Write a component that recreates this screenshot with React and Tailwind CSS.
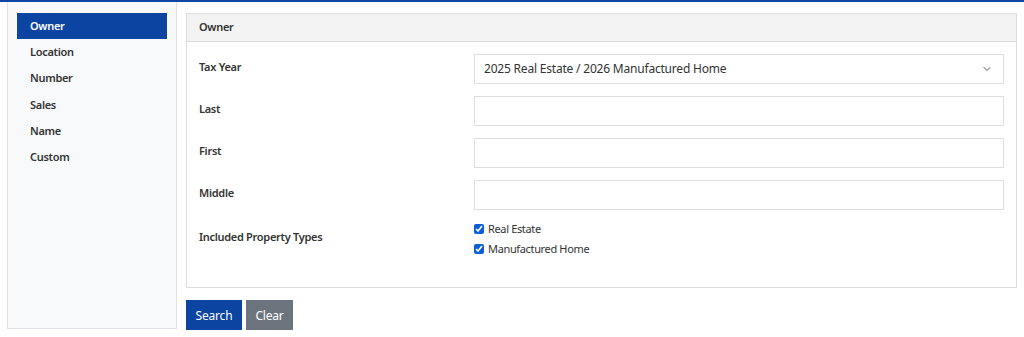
import React, { useState } from 'react';
import { ChevronDown } from 'lucide-react';

const navItems = ['Owner', 'Location', 'Number', 'Sales', 'Name', 'Custom'];

const FieldRow = ({ label, children, className = '' }) => (
  <div className={`flex items-center ${className}`}>
    <div className="w-[275px] shrink-0 pb-[3px] text-[11px] font-semibold tracking-[-0.3px] text-[#333]">{label}</div>
    <div className="flex-1">{children}</div>
  </div>
);

const TextBox = () => (
  <input
    type="text"
    className="block h-[30px] w-full border border-[#dedede] bg-white px-2 text-[12px] outline-none"
  />
);

const Check = ({ label }) => (
  <label className="flex h-[20px] items-center gap-[4px] text-[11px] tracking-[-0.35px] text-[#333]">
    <input type="checkbox" defaultChecked className="h-[10px] w-[10px] accent-[#0b5ed7]" />
    <span>{label}</span>
  </label>
);

export default function App() {
  const [active, setActive] = useState('Owner');

  return (
    <div className="min-h-[337px] border-t-2 border-[#0d47a1] bg-white font-['Noto_Sans',sans-serif] text-[#333]">
      <div className="flex">
        {/* Sidebar */}
        <div className="ml-[7px] h-[327px] w-[170px] shrink-0 border-x border-b border-[#dee2e6] bg-[#f8f9fb] px-[9px] pt-[11px]">
          {navItems.map((item) => (
            <div
              key={item}
              onClick={() => setActive(item)}
              className={
                active === item
                  ? 'flex h-[26.3px] cursor-pointer items-center bg-[#0b45a1] px-[13px] text-[11px] font-semibold tracking-[-0.3px] text-white'
                  : 'flex h-[26.3px] cursor-pointer items-center px-[13px] text-[11px] font-semibold tracking-[-0.3px] text-[#333]'
              }
            >
              {item}
            </div>
          ))}
        </div>

        {/* Main */}
        <div className="ml-[9px] mt-[11px] w-[831px]">
          <div className="border border-[#dcdcdc]">
            <div className="flex h-[28px] items-center border-b border-[#dcdcdc] bg-[#f3f3f3] px-[12px] text-[11px] font-semibold tracking-[-0.3px]">
              Owner
            </div>
            <div className="flex flex-col gap-[12px] px-[12px] pb-[28px] pt-[12px]">
              <FieldRow label="Tax Year">
                <div className="flex h-[30px] items-center justify-between border border-[#dedede] bg-white pb-[1px] pl-[9px] pr-[10px] text-[12px] tracking-[-0.2px]">
                  <span>2025 Real Estate / 2026 Manufactured Home</span>
                  <ChevronDown className="h-[12px] w-[12px] text-[#555]" strokeWidth={2} />
                </div>
              </FieldRow>
              <FieldRow label="Last">
                <TextBox />
              </FieldRow>
              <FieldRow label="First">
                <TextBox />
              </FieldRow>
              <FieldRow label="Middle">
                <TextBox />
              </FieldRow>
              <FieldRow label="Included Property Types" className="-mt-[3px]">
                <div className="flex flex-col">
                  <Check label="Real Estate" />
                  <Check label="Manufactured Home" />
                </div>
              </FieldRow>
            </div>
          </div>
          <div className="mt-[12px] flex gap-[4px]">
            <button className="h-[30px] w-[56px] bg-[#0b45a1] pt-[2px] text-[12px] tracking-[-0.2px] text-white">Search</button>
            <button className="h-[30px] w-[47px] bg-[#6c757d] pt-[2px] text-[12px] tracking-[-0.2px] text-white">Clear</button>
          </div>
        </div>
      </div>
    </div>
  );
}
